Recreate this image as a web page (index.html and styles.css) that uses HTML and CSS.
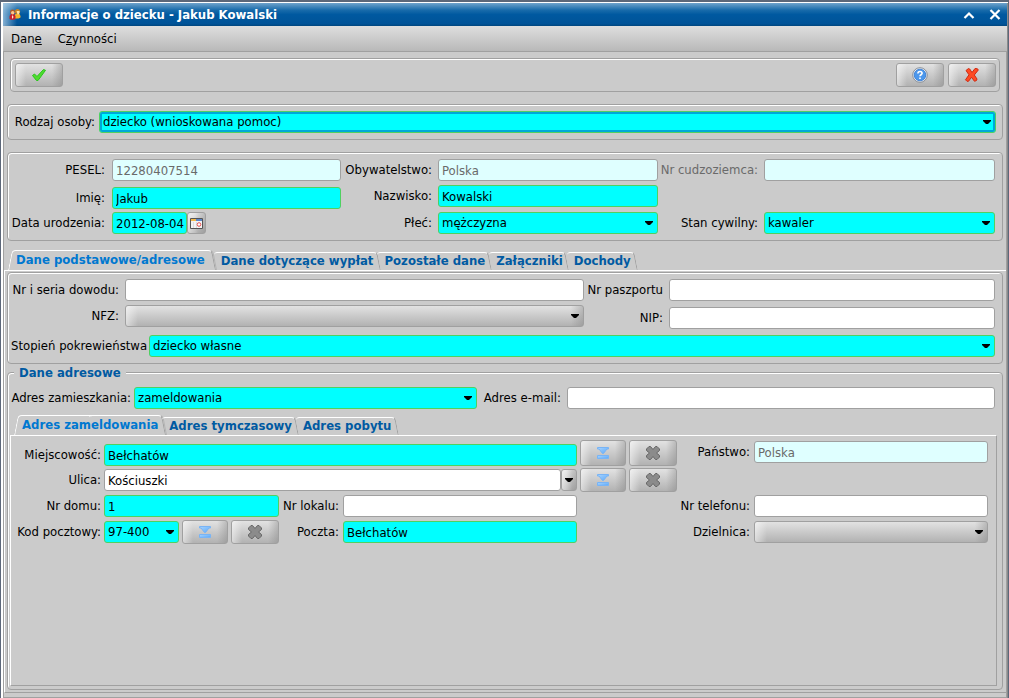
FILE: index.html
```html
<!DOCTYPE html>
<html lang="pl">
<head>
<meta charset="utf-8">
<meta name="viewport" content="width=device-width, initial-scale=1">
<title>Informacje o dziecku - Jakub Kowalski</title>
<link rel="stylesheet" href="styles.css">
</head>
<body>
<svg class="defs" aria-hidden="true">
  <defs>
    <linearGradient id="sky" x1="0" y1="0" x2="1" y2="1"><stop offset="0" stop-color="#a9d4ff"/><stop offset="1" stop-color="#5ba9f8"/></linearGradient>
    <symbol id="i-pick" viewBox="0 0 16 16">
      <path d="M2.500 2.500h11v1.500h-1.500l-3.500 4.500h-1l-3.500-4.500h-1.500z" fill="url(#sky)" stroke="#79b4f5"/>
      <path d="M2.500 10.500h11v3h-11z" fill="url(#sky)" stroke="#79b4f5"/>
    </symbol>
    <symbol id="i-clear" viewBox="0 0 16 16">
      <path d="M4 1.500h1.500l2.500 3 2.500-3h1.500l2.500 2.500v1.500l-3 2.500 3 2.500v1.500l-2.500 2.500h-1.500l-2.500-3-2.500 3h-1.500l-2.500-2.500v-1.500l3-2.500-3-2.500v-1.500z" fill="#8b8b8b" stroke="#666"/>
    </symbol>
  </defs>
</svg>
<div class="window">
  <header class="titlebar">
    <svg class="app-icon" viewBox="0 0 12 12" aria-hidden="true">
      <path d="M5.500 10.500v-3l1-1.500h4l1 2v1.500l-2 1z" fill="#f3b32e"/>
      <circle cx="8.500" cy="3.500" r="2.600" fill="#c98222"/><path d="M7.500 3h3v2l-1 1.500h-1z" fill="#ffe0a8"/>
      <path d="M0.500 11v-3l1.500-2h3l1.500 2v3l-1.500.8h-3z" fill="#c8202a"/>
      <circle cx="3.500" cy="4" r="2.400" fill="#b55a24"/><circle cx="3.700" cy="4.700" r="1.700" fill="#ffc58a"/>
      <path d="M3.500 7l1 2-1 2-.7-2z" fill="#ffe9d0"/>
    </svg>
    <h1>Informacje o dziecku - Jakub Kowalski</h1>
    <button class="win-btn" type="button" aria-label="Zwiń"><svg viewBox="0 0 12 12"><path d="M1.500 9l4.500-4.500 4.500 4.500" fill="none" stroke="#fff" stroke-width="2.200"/></svg></button>
    <button class="win-btn" type="button" aria-label="Zamknij okno"><svg viewBox="0 0 12 12"><path d="M1.500 1l9 9M10.500 1l-9 9" fill="none" stroke="#fff" stroke-width="2.200"/></svg></button>
  </header>
  <nav class="menu">
    <a href="#dane">Dan<u>e</u></a>
    <a href="#czynnosci">C<u>z</u>ynności</a>
  </nav>
  <main>
    <div class="panel toolbar">
      <button class="btn" type="button" aria-label="Zatwierdź"><svg viewBox="0 0 16 16"><path d="M1.500 8.500l2-1.500 2.500 2.500 6.500-7 2 .8-7.500 10.200h-1.500z" fill="#4fdc2e" stroke="#28c51c"/></svg></button>
      <span class="spacer"></span>
      <button class="btn" type="button" aria-label="Pomoc"><svg viewBox="0 0 16 16"><circle cx="8" cy="8" r="7.300" fill="#e8eef6" stroke="#8a9098"/><circle cx="8" cy="8" r="5.800" fill="#4b97ec" stroke="#3579cf" stroke-width=".8"/><path d="M5.900 6.500c0-2.700 4.200-2.700 4.200-.2 0 1.500-2.100 1.400-2.100 3M8 10.500v1.600" fill="none" stroke="#fff" stroke-width="1.600"/></svg></button>
      <button class="btn" type="button" aria-label="Anuluj"><svg viewBox="0 0 16 16"><path d="M2 3.500l2.500-2 1.200.5 2.300 3.500 3-4 2.500.3.800 1.200-4 5 2.700 4-.5 1.500-2 .8-3-4-3 4h-1.500l-1.500-1.500 3.500-5z" fill="#ff4a22" stroke="#cf2a12"/></svg></button>
    </div>

    <div class="panel row kind">
      <label for="kind">Rodzaj osoby:</label>
      <select id="kind" class="field req focus grow"><option>dziecko (wnioskowana pomoc)</option></select>
    </div>

    <div class="panel person">
      <div class="col col-a">
        <div class="row"><label for="pesel">PESEL:</label><input id="pesel" class="field off grow" value="12280407514" disabled></div>
        <div class="row"><label for="imie">Imię:</label><input id="imie" class="field req grow" value="Jakub"></div>
        <div class="row"><label for="data">Data urodzenia:</label><input id="data" class="field req date" value="2012-08-04"><button class="btn cal" type="button" aria-label="Kalendarz"><svg viewBox="0 0 13 11"><path d="M.5 .5h12v10h-12z" fill="#f4f4f4" stroke="#555"/><path d="M1 1h5v2h-5z" fill="#f5b94a"/><path d="M6 1h6v2h-6z" fill="#5c86c8"/><path d="M3.500 4v6M6.500 4v6" stroke="#ddd"/><circle cx="9" cy="6.500" r="1.800" fill="#fff" stroke="#e85050"/></svg></button></div>
      </div>
      <div class="col col-b">
        <div class="row"><label for="obyw">Obywatelstwo:</label><input id="obyw" class="field off grow" value="Polska" disabled></div>
        <div class="row"><label for="nazw">Nazwisko:</label><input id="nazw" class="field req grow" value="Kowalski"></div>
        <div class="row"><label for="plec">Płeć:</label><select id="plec" class="field req grow"><option>mężczyzna</option></select></div>
      </div>
      <div class="col col-c">
        <div class="row"><label class="dim" for="cudz">Nr cudzoziemca:</label><input id="cudz" class="field off grow" disabled></div>
        <div class="row"></div>
        <div class="row"><label for="stan">Stan cywilny:</label><select id="stan" class="field req grow"><option>kawaler</option></select></div>
      </div>
    </div>

    <div class="tabs outer" role="tablist">
      <button class="tab active" role="tab" aria-selected="true" type="button">Dane podstawowe/adresowe</button>
      <button class="tab" role="tab" aria-selected="false" type="button">Dane dotyczące wypłat</button>
      <button class="tab" role="tab" aria-selected="false" type="button">Pozostałe dane</button>
      <button class="tab" role="tab" aria-selected="false" type="button">Załączniki</button>
      <button class="tab" role="tab" aria-selected="false" type="button">Dochody</button>
    </div>
    <section class="page" role="tabpanel">
      <div class="panel docs">
        <div class="pair">
          <div class="col col-d">
            <div class="row"><label for="dowod">Nr i seria dowodu:</label><input id="dowod" class="field grow"></div>
            <div class="row"><label for="nfz">NFZ:</label><select id="nfz" class="field grey grow"><option></option></select></div>
          </div>
          <div class="col col-e">
            <div class="row"><label for="paszport">Nr paszportu</label><input id="paszport" class="field grow"></div>
            <div class="row"><label for="nip">NIP:</label><input id="nip" class="field grow"></div>
          </div>
        </div>
        <div class="row kin"><label for="pokr">Stopień pokrewieństwa</label><select id="pokr" class="field req grow"><option>dziecko własne</option></select></div>
      </div>

      <div class="panel address" role="group" aria-labelledby="address-title">
        <h2 id="address-title">Dane adresowe</h2>
        <div class="contact">
          <div class="row home"><label for="zam">Adres zamieszkania:</label><select id="zam" class="field req grow"><option>zameldowania</option></select></div>
          <div class="row mail"><label for="email">Adres e-mail:</label><input id="email" type="email" class="field grow"></div>
        </div>
        <div class="tabs inner" role="tablist">
          <button class="tab active" role="tab" aria-selected="true" type="button">Adres zameldowania</button>
          <button class="tab" role="tab" aria-selected="false" type="button">Adres tymczasowy</button>
          <button class="tab" role="tab" aria-selected="false" type="button">Adres pobytu</button>
        </div>
        <div class="sheet" role="tabpanel">
          <div class="col main-col">
            <div class="row town">
              <label for="miejsc">Miejscowość:</label><input id="miejsc" class="field req grow" value="Bełchatów">
              <button class="btn pick" type="button" aria-label="Wybierz miejscowość"><svg><use href="#i-pick"/></svg></button>
              <button class="btn clear" type="button" aria-label="Wyczyść miejscowość"><svg><use href="#i-clear"/></svg></button>
            </div>
            <div class="row">
              <label for="ulica">Ulica:</label><input id="ulica" class="field grow" value="Kościuszki"><button class="btn drop" type="button" aria-label="Lista ulic"></button>
              <button class="btn pick" type="button" aria-label="Wybierz ulicę"><svg><use href="#i-pick"/></svg></button>
              <button class="btn clear" type="button" aria-label="Wyczyść ulicę"><svg><use href="#i-clear"/></svg></button>
            </div>
            <div class="row short">
              <label for="dom">Nr domu:</label><input id="dom" class="field req number" value="1">
              <label class="second" for="lokal">Nr lokalu:</label><input id="lokal" class="field grow">
            </div>
            <div class="row short">
              <label for="kod">Kod pocztowy:</label><select id="kod" class="field req code"><option>97-400</option></select>
              <button class="btn pick" type="button" aria-label="Wybierz kod"><svg><use href="#i-pick"/></svg></button>
              <button class="btn clear" type="button" aria-label="Wyczyść kod"><svg><use href="#i-clear"/></svg></button>
              <label class="second" for="poczta">Poczta:</label><input id="poczta" class="field req grow" value="Bełchatów">
            </div>
          </div>
          <div class="col side-col">
            <div class="row"><label for="panstwo">Państwo:</label><input id="panstwo" class="field off grow" value="Polska" disabled></div>
            <div class="row"></div>
            <div class="row"><label for="tel">Nr telefonu:</label><input id="tel" type="tel" class="field grow"></div>
            <div class="row"><label for="dzieln">Dzielnica:</label><select id="dzieln" class="field grey grow"><option></option></select></div>
          </div>
        </div>
      </div>
    </section>
  </main>
</div>
</body>
</html>
```

FILE: styles.css
```css
:root {
  --bg: #cbcbcb;
  --line: #a0a0a0;
  --arrow: url("data:image/svg+xml,%3Csvg xmlns='http://www.w3.org/2000/svg' width='8' height='4'%3E%3Cpath d='M0 0h8v1L5 4H3L0 1z'/%3E%3C/svg%3E");
  --face:
    linear-gradient(to right, rgba(255,255,255,.5), rgba(255,255,255,0) 10px),
    linear-gradient(to left, rgba(130,130,130,.4), rgba(130,130,130,0) 10px),
    linear-gradient(#e2e2e2, #b2b2b2);
}
* { box-sizing: border-box; }
body {
  margin: 0;
  background: var(--bg);
  color: #000;
  font: 13px/14px "DejaVu Sans Condensed", "DejaVu Sans", sans-serif;
}
input, select, button { font: inherit; color: inherit; margin: 0; border-radius: 3px; }
.defs { position: absolute; width: 0; height: 0; }

.window {
  min-height: 100vh;
  display: flex;
  flex-direction: column;
  border: solid #5c6779;
  border-width: 2px 1px 0;
  box-shadow: inset 2px 1px 0 #fff, inset -1px 0 0 #8a8a8a;
  padding: 1px 1px 0 2px;
}

.titlebar {
  display: flex;
  align-items: center;
  height: 23px;
  padding: 0 6px;
  background:
    linear-gradient(to right, rgba(190,215,235,.7), rgba(190,215,235,0) 14px),
    linear-gradient(#6fa3cc, #1a6cab 30%, #0059a0 50%, #005398 90%, #00467f);
  color: #fff;
}
.titlebar h1 {
  flex: 1;
  margin: 0 0 0 7px;
  font-size: 13px;
  line-height: 14px;
}
.app-icon { width: 12px; height: 12px; margin-bottom: 2px; }
.win-btn { display: flex; padding: 0; margin-left: 14px; border: 0; background: none; }
.win-btn svg { width: 12px; height: 12px; }

.menu {
  display: flex;
  gap: 16px;
  height: 26px;
  padding: 6px 8px;
  background: linear-gradient(#dedede, #b9b9b9);
  border-bottom: 1px solid var(--line);
}
.menu a { color: #000; text-decoration: none; }

main {
  flex: 1;
  display: flex;
  flex-direction: column;
  padding: 6px 0 4px;
  border: solid var(--line);
  border-width: 0 1px 1px;
}
.panel {
  margin: 0 3px;
  border: 1px solid var(--line);
  border-radius: 4px;
  box-shadow: inset 1px 1px 0 #fff;
}
.toolbar { display: flex; gap: 4px; margin: 0 6px; padding: 4px 3px 4px 4px; }
.spacer, .grow { flex: 1; min-width: 0; }

.btn {
  display: flex;
  flex: none;
  align-items: center;
  justify-content: center;
  width: 48px;
  height: 24px;
  padding: 0;
  border: 1px solid var(--line);
  background: var(--face);
}
.btn svg { width: 16px; height: 16px; }

.row { display: flex; align-items: center; min-height: 22px; }
.col { display: grid; align-items: start; }
label { flex: none; line-height: 22px; text-align: right; white-space: nowrap; }
.dim { color: #6a6a6a; }

.field {
  height: 22px;
  padding: 0 3px;
  border: 1px solid var(--line);
  background: #fff;
  outline: 0;
}
.req { background-color: #0ff; border-color: #50d060; }
.off { background-color: #dfffff; color: #6a6a6a; }
select.field {
  appearance: none;
  background-image: var(--arrow);
  background-repeat: no-repeat;
  background-position: right 4px center;
}
select.grey {
  background:
    var(--arrow) no-repeat right 4px center,
    linear-gradient(to right, rgba(255,255,255,.5), rgba(255,255,255,0) 12px),
    linear-gradient(to left, rgba(130,130,130,.4), rgba(130,130,130,0) 12px),
    linear-gradient(#e2e2e2, #b2b2b2);
}
.focus { box-shadow: inset 0 0 0 2px #00a8d8; }

.kind { margin-top: 12px; padding: 6px 6px 6px 0; }
.kind label { width: 91px; padding-right: 4px; }

.person { display: flex; margin-top: 12px; padding: 6px 7px 6px 0; }
.col-a { flex: 229 1 104px; grid-template-rows: 28px 25px 22px; }
.col-a label { width: 104px; padding-right: 7px; }
.col-b { flex: 220 1 97px; grid-template-rows: 26px 27px 22px; }
.col-b label { width: 97px; padding-right: 6px; }
.col-c { flex: 231 1 106px; grid-template-rows: 26px 27px 22px; }
.col-c label { width: 106px; padding-right: 6px; }
.date { width: 75px; padding-right: 0; }
.cal { width: 19px; height: 22px; }
.cal svg { width: 13px; height: 11px; }

.tabs { display: flex; height: 20px; margin-top: 9px; padding-left: 6px; }
.tab {
  position: relative;
  padding: 2px 5px 0 6px;
  border: 0;
  background: none;
  color: #005aa2;
  font-weight: bold;
  line-height: 16px;
  white-space: nowrap;
}
.tab.active { padding-top: 0; color: #0078d0; }
.outer .active { padding-right: 10px; }
.tab::before, .tab::after {
  content: "";
  position: absolute;
  z-index: -1;
  top: 2px;
  bottom: 0;
  left: 0;
  right: 0;
  border-top: 1px solid #fff;
}
.tab::before {
  border-right: 1px solid var(--line);
  border-radius: 4px 4px 0 0;
  transform: skewX(11deg);
}
.tab::after { display: none; }
.tab.active::before { top: 0; left: 50%; box-shadow: 1px 0 0 #b4b4b4; }
.tab.active::after {
  display: block;
  top: 0;
  right: 50%;
  border-left: 1px solid #fff;
  border-radius: 4px 0 0 0;
  transform: skewX(-11deg);
}
.window, .tabs { isolation: isolate; }

.page {
  flex: 1;
  display: flex;
  flex-direction: column;
  padding: 1px 3px 2px 2px;
  border: 1px solid #fff;
  border-right: 0;
  border-bottom-color: var(--line);
}
.page > .panel { margin: 0; }
.docs { padding: 6px 7px 6px 3px; }
.pair { display: flex; }
.col-d { flex: 459 1 114px; grid-template-rows: 26px 28px; }
.col-d label { width: 114px; padding-right: 6px; }
.col-e { flex: 326 1 85px; grid-template-rows: 28px 26px; }
.col-e label { width: 85px; padding-right: 6px; }
.kin { margin-top: 2px; }
.kin label { width: 138px; padding-right: 2px; }

.page > .address {
  flex: 1;
  display: flex;
  flex-direction: column;
  margin-top: 8px;
  padding: 0 5px 3px 2px;
}
.address h2 {
  align-self: flex-start;
  margin: -8px 0 6px 4px;
  padding: 0 5px 0 5px;
  background: var(--bg);
  color: #005aa2;
  font-size: 13px;
  line-height: 16px;
}
.contact { display: flex; padding: 0 2px 0 0; }
.home { flex: 343 1 124px; }
.home label { width: 124px; padding-right: 3px; }
.mail { flex: 428 1 90px; }
.mail label { width: 90px; padding-right: 6px; }
.inner { flex: none; margin-top: 6px; padding-left: 6px; }

.sheet {
  flex: 1;
  display: flex;
  align-items: flex-start;
  padding: 4px 8px 20px 0;
  border: solid #fff;
  border-width: 1px 0 0 1px;
  border-right: 1px solid var(--line);
  border-bottom: 1px solid var(--line);
}
.main-col { flex: 473 1 193px; grid-template-rows: 28px 26px 26px 26px; }
.main-col label { width: 93px; padding-right: 3px; }
.main-col .row { min-height: 24px; }
.main-col .town { align-items: flex-end; min-height: 26px; }
.main-col .pick { width: 46px; margin-left: 3px; }
.main-col .clear { margin-left: 3px; }
.main-col .town .btn { height: 26px; }
.main-col .short { margin-right: 100px; }
.main-col .second { flex: 1; min-width: 64px; padding-right: 4px; }
.main-col .short .second + .grow { flex: 0 1 234px; }
.number { width: 175px; }
.code { width: 75px; }
.main-col .drop { width: 16px; height: 22px; background: var(--arrow) no-repeat center, var(--face); }
.side-col { flex: 234 1 77px; grid-template-rows: 28px 26px 26px 22px; padding-top: 1px; }
.side-col label { width: 77px; padding-right: 4px; }
```
